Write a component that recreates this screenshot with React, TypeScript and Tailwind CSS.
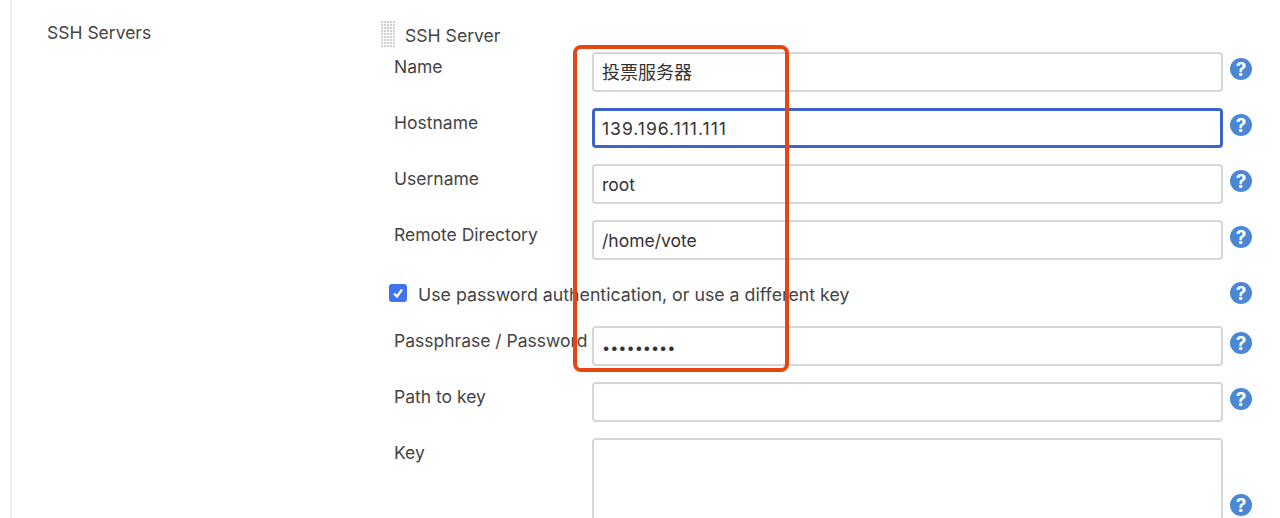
import { FC } from "react";

const font = "font-['Inter','Noto_Sans_CJK_SC',sans-serif]";

const HelpIcon: FC = () => (
  <span className="flex size-[22px] shrink-0 items-center justify-center rounded-full bg-[#4a87d4] text-[19px] font-bold leading-none text-white">
    ?
  </span>
);

const fieldBase = "h-10 w-[631px] shrink-0 rounded-[4px] bg-white text-[#333] outline-none";

type RowProps = { label: string; value?: string; type?: string; inputClass?: string };

const Row: FC<RowProps> = ({
  label,
  value = "",
  type = "text",
  inputClass = "border-2 border-[#d6d6d6] px-[8px] text-[17.5px]",
}) => (
  <div className="flex h-10 items-start">
    <label className="w-[198px] shrink-0 pt-[3px] text-[17.5px] leading-[24px] text-[#444]">{label}</label>
    <input readOnly type={type} value={value} className={`${fieldBase} ${inputClass}`} />
    <div className="ml-[7px] flex h-[34px] items-center">
      <HelpIcon />
    </div>
  </div>
);

const DragHandle: FC = () => (
  <svg width="16" height="26" viewBox="0 0 16 26" fill="#cfcfcf" className="shrink-0">
    {Array.from({ length: 9 }).flatMap((_, r) =>
      Array.from({ length: 5 }).map((_, c) => (
        <rect key={`${r}-${c}`} x={1 + c * 3} y={r * 3} width="2" height="2" />
      ))
    )}
  </svg>
);

export default function App() {
  return (
    <div className={`${font} relative h-[518px] w-[1280px] overflow-hidden bg-white`}>
      <div className="ml-[10px] flex h-full border-l-2 border-[#f0f0f0] pl-[35px] pt-[21px]">
        <div className="w-[333px] shrink-0 text-[17.5px] leading-[24px] text-[#444]">SSH Servers</div>

        <div className="flex-1">
          <div className="flex h-[26px] items-center gap-[9px]">
            <DragHandle />
            <span className="pt-[4px] text-[17.6px] leading-[24px] text-[#444]">SSH Server</span>
          </div>

          <div className="ml-[14px] mt-[5px] flex flex-col gap-4">
            <Row label="Name" value="投票服务器" inputClass="border-2 border-[#d6d6d6] px-[8px] pb-[2px] text-[18px]" />
            <Row
              label="Hostname"
              value="139.196.111.111"
              inputClass="border-[3px] border-[#3b63c9] px-[7px] text-[17.5px] tracking-[1px]"
            />
            <Row label="Username" value="root" />
            <Row label="Remote Directory" value="/home/vote" />

            <div className="-ml-[5px] flex h-[34px] items-center">
              <span className="flex size-[18px] shrink-0 items-center justify-center rounded-[3px] bg-[#3f73f2]">
                <svg width="12" height="12" viewBox="0 0 12 12" fill="none" stroke="white" strokeWidth="2.2">
                  <path d="M2 6.5 L5 9.5 L10 2.5" />
                </svg>
              </span>
              <span className="ml-[11px] w-[812px] shrink-0 pt-[4px] text-[17.75px] leading-[24px] text-[#444]">
                Use password authentication, or use a different key
              </span>
              <HelpIcon />
            </div>

            <Row
              label="Passphrase / Password"
              value="123456789"
              type="password"
              inputClass="border-2 border-[#d6d6d6] px-[8px] pt-[2px] text-[14.5px]"
            />
            <Row label="Path to key" />
            <div className="flex items-end">
              <label className="h-[100px] w-[198px] shrink-0 pt-[3px] text-[17.5px] leading-[24px] text-[#444]">
                Key
              </label>
              <textarea readOnly className={`${fieldBase} h-[100px] resize-none border-2 border-[#d6d6d6]`} />
              <div className="mb-[22px] ml-[7px]">
                <HelpIcon />
              </div>
            </div>
          </div>
        </div>
      </div>

      <div className="pointer-events-none absolute left-[573px] top-[45px] h-[327px] w-[216px] rounded-[8px] border-4 border-[#e6450f]" />
    </div>
  );
}
